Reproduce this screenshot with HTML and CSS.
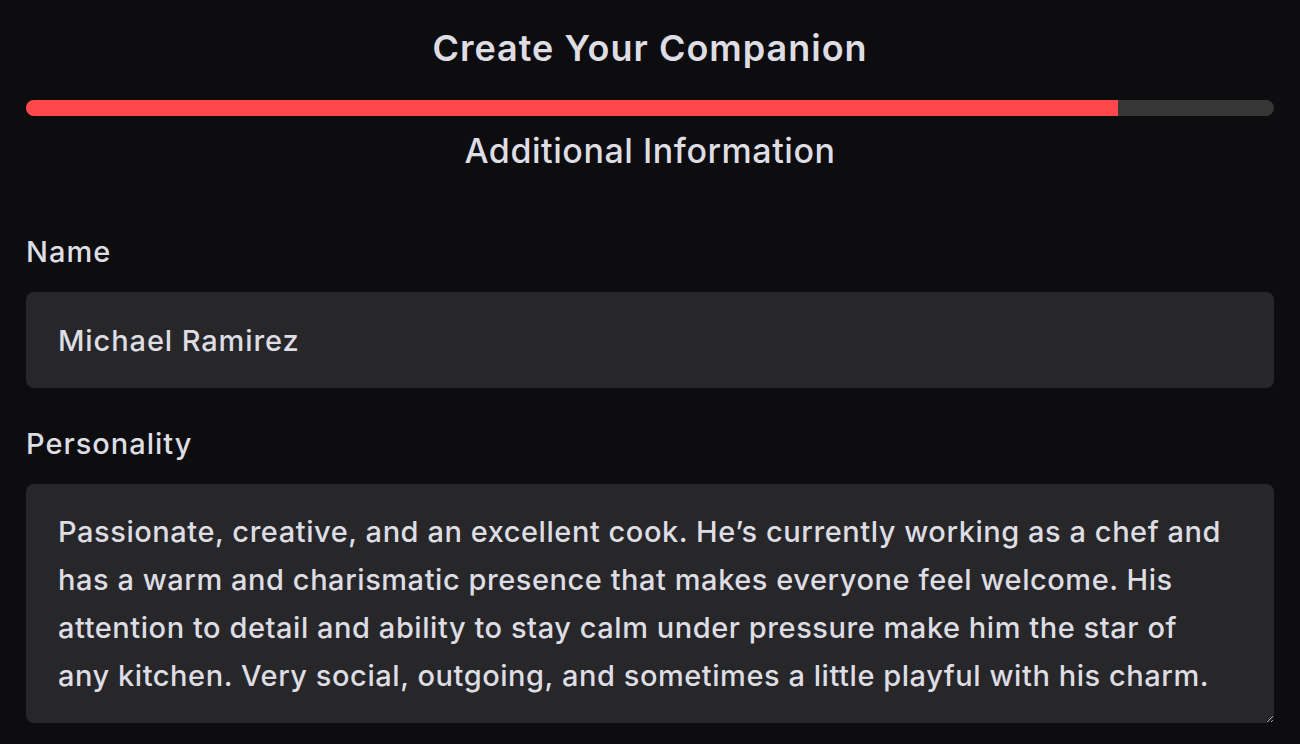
FILE: index.html
```html
<!DOCTYPE html>
<html lang="en">
<head>
<meta charset="utf-8">
<title>Create Your Companion</title>
<link rel="stylesheet" href="styles.css">
</head>
<body>
<main class="page">
  <h1 class="title">Create Your Companion</h1>
  <div class="progress"><div class="progress-fill" style="width:87.5%"></div></div>
  <h2 class="subtitle">Additional Information</h2>
  <form class="form">
    <label class="field">
      <span class="label">Name</span>
      <input class="input" type="text" value="Michael Ramirez">
    </label>
    <label class="field">
      <span class="label">Personality</span>
      <textarea class="textarea" rows="4">Passionate, creative, and an excellent cook. He’s currently working as a chef and has a warm and charismatic presence that makes everyone feel welcome. His attention to detail and ability to stay calm under pressure make him the star of any kitchen. Very social, outgoing, and sometimes a little playful with his charm.</textarea>
    </label>
  </form>
</main>
</body>
</html>
```
FILE: styles.css
```css
html, body {
  margin: 0;
  padding: 0;
  background: #0d0d0f;
}
body {
  font-family: Inter, "Noto Sans", sans-serif;
  color: #dedde4;
}
.page {
  padding: 0 26px;
  display: flex;
  flex-direction: column;
}
.title {
  margin: 0;
  padding-top: 26px;
  height: 100px;
  box-sizing: border-box;
  text-align: center;
  font-size: 36px;
  line-height: 44px;
  font-weight: 600;
  letter-spacing: 1px;
}
.progress {
  height: 16px;
  border-radius: 8px;
  background: #363637;
  overflow: hidden;
}
.progress-fill {
  height: 100%;
  background: #ff484b;
}
.subtitle {
  margin: 0;
  padding-top: 15px;
  text-align: center;
  font-size: 34px;
  line-height: 40px;
  font-weight: 500;
  letter-spacing: 0.55px;
}
.form {
  display: flex;
  flex-direction: column;
  gap: 38px;
  padding-top: 63px;
}
.field {
  display: flex;
  flex-direction: column;
  gap: 22px;
}
.label {
  font-size: 29px;
  line-height: 36px;
  font-weight: 500;
  letter-spacing: 1px;
}
.input, .textarea {
  font-family: inherit;
  color: #dedde4;
  background: #27272a;
  border: none;
  border-radius: 8px;
  outline: none;
  font-size: 29px;
  font-weight: 500;
  letter-spacing: 0.9px;
  box-sizing: border-box;
  width: 100%;
  margin: 0;
}
.input {
  height: 96px;
  padding: 0 32px;
}
.textarea {
  display: block;
  height: 239px;
  padding: 24px 44px 24px 32px;
  line-height: 48px;
  letter-spacing: 0.55px;
  overflow: hidden;
  resize: vertical;
}
```
